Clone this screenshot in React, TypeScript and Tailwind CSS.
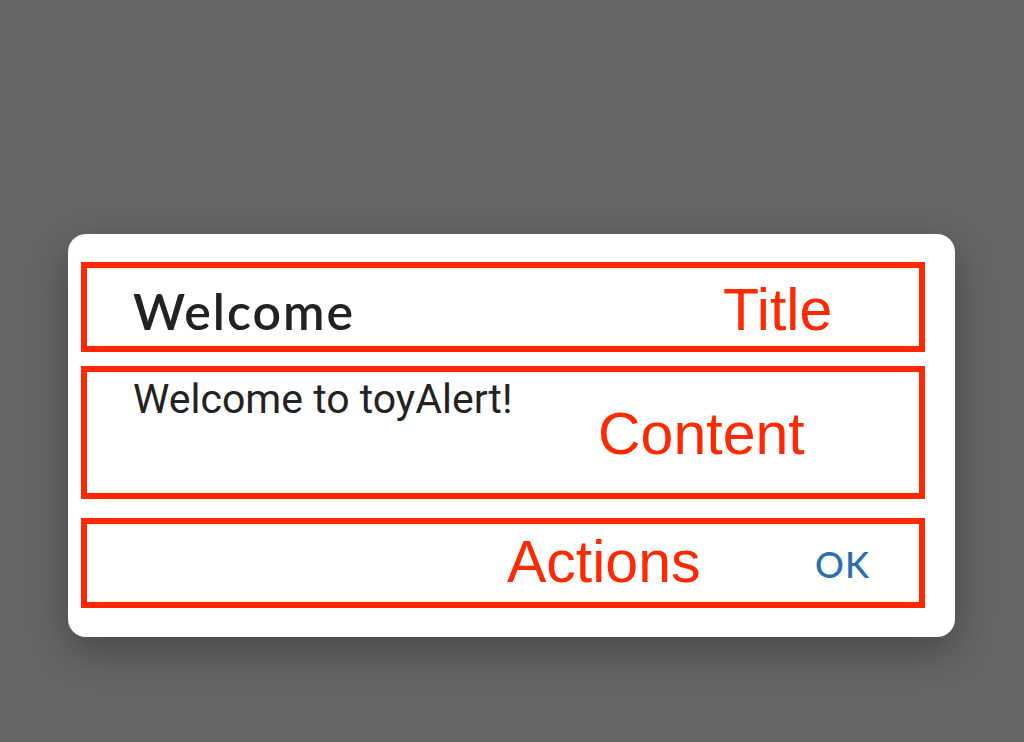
import React from "react";

export default function App() {
  return (
    <div className="w-[1024px] h-[742px] bg-[#666666] overflow-hidden pt-[234px] pl-[68px]">
      <div className="w-[887px] h-[403px] bg-white rounded-[18px] shadow-[0_14px_44px_rgba(0,0,0,0.32)] pt-[28px] pl-[13px] flex flex-col">
        {/* Title */}
        <div className="w-[844px] h-[90px] border-[6px] border-[#ff2800] flex items-start pl-[46px]">
          <span className="w-[590px] shrink-0 mt-[18px] font-['Lato','Noto_Sans',sans-serif] text-[50px] leading-none font-semibold tracking-[2px] text-[#222222] whitespace-nowrap">
            Welcome
          </span>
          <span className="mt-[13px] font-['Liberation_Sans',Arial,sans-serif] text-[59px] leading-none text-[#ff2800] whitespace-nowrap">
            Title
          </span>
        </div>
        {/* Content */}
        <div className="w-[844px] h-[133px] mt-[14px] border-[6px] border-[#ff2800] flex items-start pl-[46px]">
          <span className="w-[465px] shrink-0 mt-[7px] font-['Roboto','Noto_Sans',sans-serif] text-[41px] leading-none text-[#222222] whitespace-nowrap">
            Welcome to toyAlert!
          </span>
          <span className="mt-[33px] font-['Liberation_Sans',Arial,sans-serif] text-[59px] leading-none text-[#ff2800] whitespace-nowrap">
            Content
          </span>
        </div>
        {/* Actions */}
        <div className="w-[844px] h-[90px] mt-[19px] border-[6px] border-[#ff2800] flex items-start pl-[420px]">
          <span className="w-[308px] shrink-0 mt-[9px] font-['Liberation_Sans',Arial,sans-serif] text-[59px] leading-none text-[#ff2800] whitespace-nowrap">
            Actions
          </span>
          <span className="mt-[22px] font-['Lato','Noto_Sans',sans-serif] text-[36px] leading-none font-medium tracking-[1px] text-[#2a6fad] whitespace-nowrap">
            OK
          </span>
        </div>
      </div>
    </div>
  );
}
